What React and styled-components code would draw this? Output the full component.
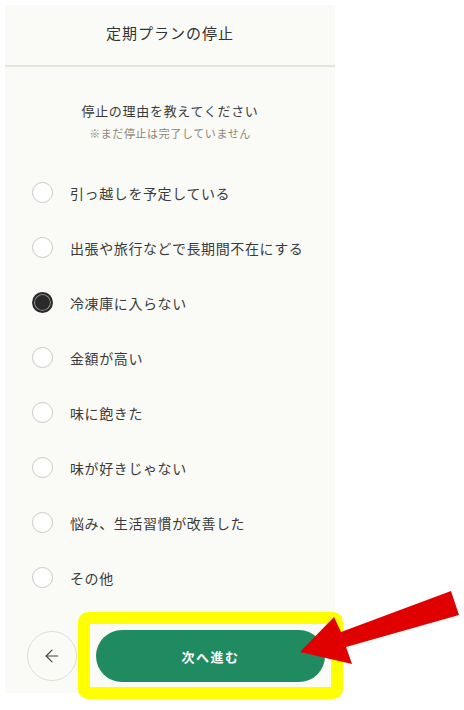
import React, { useState } from 'react';
import styled, { createGlobalStyle } from 'styled-components';
import { ArrowLeft } from 'lucide-react';

const GlobalStyle = createGlobalStyle`
    body {
        margin: 0;
        background: #ffffff;
        font-family: "Noto Sans CJK JP", "Noto Sans", sans-serif;
        color: #3a3a3a;
    }
`

const reasons = [
    "引っ越しを予定している",
    "出張や旅行などで長期間不在にする",
    "冷凍庫に入らない",
    "金額が高い",
    "味に飽きた",
    "味が好きじゃない",
    "悩み、生活習慣が改善した",
    "その他",
];

const App = () => {

    // selected reason
    const [selected, setSelected] = useState(2);

    return (<Page>
        <GlobalStyle />
        <Panel>
            <Header>
                <Title>定期プランの停止</Title>
            </Header>

            <Intro>
                <Question>停止の理由を教えてください</Question>
                <Note>※まだ停止は完了していません</Note>
            </Intro>

            <ReasonList>
                {reasons.map((r, i) => (
                    <Reason key={r} onClick={() => setSelected(i)}>
                        <Radio checked={selected === i} />
                        <ReasonText>{r}</ReasonText>
                    </Reason>
                ))}
            </ReasonList>

            <Footer>
                <BackButton type="button" aria-label="戻る">
                    <ArrowLeft size={20} strokeWidth={1.4} />
                </BackButton>
                <NextButton type="button">次へ進む</NextButton>
            </Footer>
        </Panel>

        {/* annotation overlay */}
        <Highlight />
        <Arrow width="464" height="710" viewBox="0 0 464 710">
            <polygon
                points="300,652 334,617 341,632 451,591 459,615 346,647 352,664"
                fill="#e00000" />
        </Arrow>
    </Page>
    );
}

export default App;

const Page = styled.div`
    position: relative;
    width: 464px;
    height: 710px;
    overflow: hidden;
`

const Panel = styled.div`
    margin: 5px 0 0 5px;
    width: 330px;
    height: 688px;
    background: #fafaf6;
    display: flex;
    flex-direction: column;
`

const Header = styled.div`
    height: 62px;
    border-bottom: 2px solid #e6e4d9;
    display: flex;
    justify-content: center;
    padding-top: 18px;
    box-sizing: border-box;
`

const Title = styled.h1`
    margin: 0;
    font-size: 15px;
    font-weight: 400;
    line-height: 20px;
    letter-spacing: 1px;
    color: #333;
`

const Intro = styled.div`
    padding-top: 35px;
    display: flex;
    flex-direction: column;
    align-items: center;
    gap: 5px;
`

const Question = styled.p`
    margin: 0;
    font-size: 13px;
    line-height: 18px;
    letter-spacing: 0.7px;
    color: #3a3a3a;
`

const Note = styled.p`
    margin: 0;
    font-size: 11px;
    line-height: 16px;
    letter-spacing: 0.6px;
    color: #8c8878;
`

const ReasonList = styled.div`
    margin-top: 24px;
    display: flex;
    flex-direction: column;
`

const Reason = styled.label`
    height: 55px;
    display: flex;
    align-items: center;
    gap: 17px;
    padding-left: 27px;
    cursor: pointer;
`

const Radio = styled.span`
    width: 21px;
    height: 21px;
    border-radius: 50%;
    box-sizing: border-box;
    flex-shrink: 0;
    border: ${p => p.checked ? "2px solid #2a2a2a" : "1.5px solid #cbc9bf"};
    background: ${p => p.checked ? "#2a2a2a" : "#ffffff"};
    box-shadow: ${p => p.checked ? "inset 0 0 0 1px #9a9a9a" : "none"};
`

const ReasonText = styled.span`
    font-size: 14px;
    letter-spacing: 0.6px;
    color: #3a3a3a;
`

const Footer = styled.div`
    margin-top: 25px;
    display: flex;
    align-items: center;
    gap: 19px;
    padding: 0 10px 0 22px;
`

const BackButton = styled.button`
    width: 50px;
    height: 50px;
    border-radius: 50%;
    border: 1px solid #e0ddd4;
    background: #fafaf6;
    color: #444;
    display: flex;
    align-items: center;
    justify-content: center;
    padding: 0;
    flex-shrink: 0;
`

const NextButton = styled.button`
    flex: 1;
    height: 52px;
    border: none;
    border-radius: 26px;
    background: #208b60;
    color: #ffffff;
    font-family: "Noto Sans CJK JP", "Noto Sans", sans-serif;
    font-size: 13px;
    font-weight: 700;
    letter-spacing: 1.5px;
`

const Highlight = styled.div`
    position: absolute;
    left: 78px;
    top: 612px;
    width: 265px;
    height: 87px;
    box-sizing: border-box;
    border: 12px solid #ffff00;
    border-radius: 10px;
    pointer-events: none;
`

const Arrow = styled.svg`
    position: absolute;
    left: 0;
    top: 0;
    pointer-events: none;
`
